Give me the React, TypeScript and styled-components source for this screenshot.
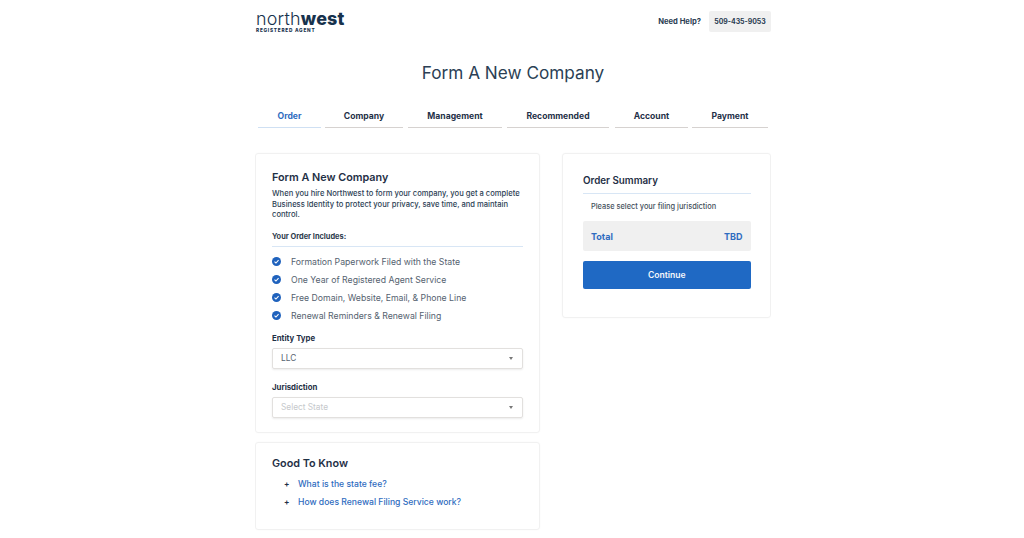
import React from "react";
import styled, { createGlobalStyle } from "styled-components";

const Global = createGlobalStyle`
  html, body { margin: 0; padding: 0; background: #fff; }
  body { font-family: Inter, "Open Sans", "Liberation Sans", sans-serif; color: #1c2f45; }
`;

const Page = styled.div`
  width: 516px;
  height: 538px;
  margin-left: 255px;
  overflow: hidden;
  display: flex;
  flex-direction: column;
`;

const Header = styled.header`
  height: 44px;
  padding: 11px 0 0 1px;
  display: flex;
  justify-content: space-between;
  align-items: flex-start;
  box-sizing: border-box;
`;

const Logo = styled.div`
  display: flex;
  flex-direction: column;
  color: #17324d;
`;

const LogoWord = styled.div`
  font-size: 17.9px;
  line-height: 15px;
  letter-spacing: 0.2px;
  height: 15px;
  font-weight: 300;
  b { font-weight: 800; }
`;

const LogoSub = styled.div`
  margin-top: 0.5px;
  font-size: 4.7px;
  line-height: 6px;
  font-weight: 800;
  letter-spacing: 0.78px;
`;

const Help = styled.div`
  display: flex;
  align-items: center;
  gap: 8px;
`;

const HelpLabel = styled.span`
  font-size: 7.6px;
  font-weight: 700;
  color: #2a3d52;
`;

const Phone = styled.span`
  width: 62px;
  height: 21px;
  background: #f0f0f0;
  border-radius: 2px;
  display: flex;
  align-items: center;
  justify-content: center;
  font-size: 6.9px;
  font-weight: 700;
  color: #2a3d52;
`;

const Title = styled.h1`
  margin: 0;
  height: 57px;
  padding-top: 18px;
  box-sizing: border-box;
  text-align: center;
  font-size: 17.2px;
  line-height: 22px;
  font-weight: 400;
  color: #2b3f55;
`;

const Tabs = styled.nav`
  padding-left: 3px;
  display: flex;
  height: 46px;
  align-items: flex-start;
  margin-top: 6px;
`;

const Tab = styled.div<{ $w: number; $gap: number; $active?: boolean }>`
  width: ${(p) => p.$w}px;
  margin-right: ${(p) => p.$gap}px;
  height: 21px;
  box-sizing: border-box;
  padding-top: 3px;
  text-align: center;
  font-size: 8.6px;
  line-height: 12px;
  font-weight: 700;
  color: ${(p) => (p.$active ? "#2f6cc0" : "#1f3148")};
  border-bottom: 1.5px solid ${(p) => (p.$active ? "#cfe0f3" : "#d6d2d0")};
`;

const Columns = styled.div`
  display: flex;
  align-items: flex-start;
  gap: 22px;
`;

const LeftColumn = styled.div`
  width: 285px;
  display: flex;
  flex-direction: column;
  gap: 9px;
`;

const Card = styled.section`
  border: 1px solid #f1f1f1;
  border-radius: 3px;
  box-sizing: border-box;
  box-shadow: 0 0 2px rgba(0, 0, 0, 0.03);
`;

const MainCard = styled(Card)`
  height: 280px;
  padding: 16px 16px 0;
`;

const KnowCard = styled(Card)`
  height: 88px;
  padding: 13px 16px 0;
`;

const SummaryCard = styled(Card)`
  width: 209px;
  height: 165px;
  padding: 20px 19.5px 0 20px;
`;

const CardTitle = styled.h2`
  margin: 0;
  font-size: 10.8px;
  line-height: 15px;
  font-weight: 600;
  color: #1f3046;
`;

const Intro = styled.p`
  margin: 4px 0 0;
  font-size: 7.6px;
  line-height: 10.5px;
  font-weight: 500;
  color: #2c3e54;
`;

const IncludesLabel = styled.div`
  margin-top: 11px;
  padding-bottom: 4px;
  font-size: 7.4px;
  line-height: 10px;
  font-weight: 700;
  color: #2c3a4c;
  border-bottom: 1px solid #d8e6f5;
`;

const Checks = styled.ul`
  list-style: none;
  margin: 9px 0 0;
  padding: 0;
  display: flex;
  flex-direction: column;
  gap: 6px;
`;

const CheckRow = styled.li`
  display: flex;
  align-items: center;
  gap: 10px;
  height: 12px;
  font-size: 8.7px;
  color: #55626f;
`;

const FieldLabel = styled.div<{ $top: number }>`
  margin-top: ${(p) => p.$top}px;
  font-size: 7.8px;
  line-height: 11px;
  font-weight: 700;
  color: #1f3046;
`;

const Select = styled.div<{ $placeholder?: boolean }>`
  margin-top: 4px;
  height: 21px;
  box-sizing: border-box;
  padding: 0 9px 0 8px;
  border: 1px solid #e2e0de;
  border-radius: 2px;
  box-shadow: 0 1px 2px rgba(0, 0, 0, 0.08);
  display: flex;
  align-items: center;
  justify-content: space-between;
  font-size: 8.3px;
  color: ${(p) => (p.$placeholder ? "#c6c9cc" : "#55626f")};
`;

const Caret = styled.span`
  width: 0;
  height: 0;
  border-left: 2.5px solid transparent;
  border-right: 2.5px solid transparent;
  border-top: 3px solid #777;
`;

const Faq = styled.ul`
  list-style: none;
  margin: 7px 0 0;
  padding: 0 0 0 12px;
  display: flex;
  flex-direction: column;
  gap: 6px;
`;

const FaqRow = styled.li`
  display: flex;
  align-items: center;
  gap: 9px;
  height: 12px;
  font-size: 8.6px;
  font-weight: 500;
  color: #2f6cc0;
`;

const Plus = styled.span`
  width: 5px;
  font-size: 8px;
  font-weight: 700;
  color: #1f3046;
  text-align: center;
`;

const SummaryTitle = styled(CardTitle)`
  font-size: 9.8px;
  line-height: 13px;
  padding-bottom: 6px;
  border-bottom: 1px solid #d8e6f5;
`;

const SummaryNote = styled.div`
  margin: 8px 0 0 8px;
  font-size: 7.4px;
  line-height: 10px;
  font-weight: 500;
  color: #444f5c;
`;

const Total = styled.div`
  margin-top: 9px;
  height: 30px;
  padding: 0 8px;
  background: #f0f0f0;
  border-radius: 2px;
  display: flex;
  align-items: center;
  justify-content: space-between;
  font-size: 9px;
  font-weight: 700;
  color: #2f6cc0;
`;

const Button = styled.div`
  margin-top: 10px;
  height: 28px;
  background: #1f69c4;
  border-radius: 2px;
  display: flex;
  align-items: center;
  justify-content: center;
  font-size: 8.6px;
  font-weight: 600;
  color: #f4f7fb;
`;

const CheckIcon = () => (
  <svg width="9" height="9" viewBox="0 0 10 10" style={{ flex: "none" }}>
    <circle cx="5" cy="5" r="5" fill="#1f62bd" />
    <path d="M2.8 5.1 4.4 6.7 7.3 3.6" fill="none" stroke="#fff" strokeWidth="1.2" />
  </svg>
);

const tabs: [string, number, number][] = [
  ["Order", 63, 4],
  ["Company", 78, 5],
  ["Management", 94, 5],
  ["Recommended", 102, 6],
  ["Account", 73, 4],
  ["Payment", 76, 0],
];

const checks = [
  "Formation Paperwork Filed with the State",
  "One Year of Registered Agent Service",
  "Free Domain, Website, Email, & Phone Line",
  "Renewal Reminders & Renewal Filing",
];

export default function App() {
  return (
    <>
      <Global />
      <Page>
        <Header>
          <Logo>
            <LogoWord>
              north<b>west</b>
            </LogoWord>
            <LogoSub>REGISTERED AGENT</LogoSub>
          </Logo>
          <Help>
            <HelpLabel>Need Help?</HelpLabel>
            <Phone>509-435-9053</Phone>
          </Help>
        </Header>
        <Title>Form A New Company</Title>
        <Tabs>
          {tabs.map(([name, w, gap], i) => (
            <Tab key={name} $w={w} $gap={gap} $active={i === 0}>
              {name}
            </Tab>
          ))}
        </Tabs>
        <Columns>
          <LeftColumn>
            <MainCard>
              <CardTitle>Form A New Company</CardTitle>
              <Intro>
                When you hire Northwest to form your company, you get a complete Business Identity to protect
                your privacy, save time, and maintain control.
              </Intro>
              <IncludesLabel>Your Order Includes:</IncludesLabel>
              <Checks>
                {checks.map((c) => (
                  <CheckRow key={c}>
                    <CheckIcon />
                    {c}
                  </CheckRow>
                ))}
              </Checks>
              <FieldLabel $top={11}>Entity Type</FieldLabel>
              <Select>
                LLC
                <Caret />
              </Select>
              <FieldLabel $top={13}>Jurisdiction</FieldLabel>
              <Select $placeholder>
                Select State
                <Caret />
              </Select>
            </MainCard>
            <KnowCard>
              <CardTitle>Good To Know</CardTitle>
              <Faq>
                <FaqRow>
                  <Plus>+</Plus>
                  What is the state fee?
                </FaqRow>
                <FaqRow>
                  <Plus>+</Plus>
                  How does Renewal Filing Service work?
                </FaqRow>
              </Faq>
            </KnowCard>
          </LeftColumn>
          <SummaryCard>
            <SummaryTitle>Order Summary</SummaryTitle>
            <SummaryNote>Please select your filing jurisdiction</SummaryNote>
            <Total>
              <span>Total</span>
              <span>TBD</span>
            </Total>
            <Button>Continue</Button>
          </SummaryCard>
        </Columns>
      </Page>
    </>
  );
}
